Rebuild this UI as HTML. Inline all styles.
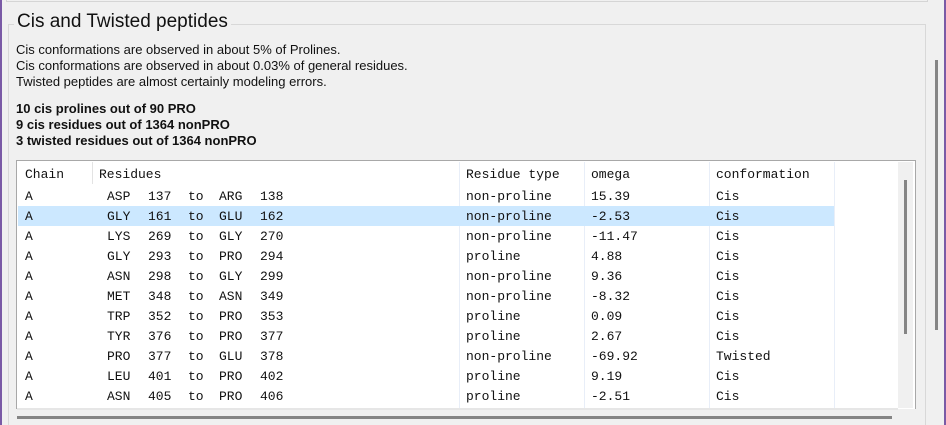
<!DOCTYPE html>
<html><head><style>
body{margin:0;width:946px;height:425px;background:#f0f0f0;position:relative;overflow:hidden;font-family:"Liberation Sans",sans-serif;}
.a{position:absolute}
.m{font-family:"Liberation Mono",monospace;font-size:13px;color:#111;white-space:pre}
</style></head><body>
<div class="a" style="left:0;top:0;width:2px;height:425px;background:#7a5aa6"></div>
<div class="a" style="left:944px;top:0;width:2px;height:425px;background:#7a5aa6"></div>
<div class="a" style="left:6px;top:0;width:920px;height:1px;border-bottom:1px solid #d5d5d5;border-left:1px solid #d5d5d5;border-right:1px solid #d5d5d5"></div>
<div class="a" style="left:8px;top:24px;width:916px;height:400px;border:1px solid #d8d8d8;border-bottom:none"></div>
<div class="a" style="left:14px;top:11px;padding:0 3px;background:#f0f0f0;font-size:19px;color:#111">Cis and Twisted peptides</div>
<div class="a" style="left:16px;top:42px;font-size:13px;line-height:16px;color:#111">Cis conformations are observed in about 5% of Prolines.<br>Cis conformations are observed in about 0.03% of general residues.<br>Twisted peptides are almost certainly modeling errors.</div>
<div class="a" style="left:16px;top:101px;font-size:13px;line-height:16px;font-weight:bold;color:#111">10 cis prolines out of 90 PRO<br>9 cis residues out of 1364 nonPRO<br>3 twisted residues out of 1364 nonPRO</div>
<div class="a" style="left:16px;top:160px;width:898px;height:248px;border:1px solid #a8a8a8;border-bottom:none;background:#fff"></div>
<div class="a" style="left:898px;top:162px;width:15px;height:246px;background:#f0f0f0"></div>
<div class="a" style="left:904px;top:180px;width:3px;height:154px;background:#858585"></div>
<div class="a" style="left:935px;top:60px;width:3px;height:270px;background:#858585"></div>
<div class="a" style="left:17px;top:408px;width:881px;height:2px;background:#e6e6e6"></div>
<div class="a" style="left:17px;top:416px;width:875px;height:3px;background:#858585"></div>
<div class="a" style="left:92px;top:162px;width:1px;height:22px;background:#e3e3e3"></div>
<div class="a" style="left:459px;top:162px;width:1px;height:246px;background:#e8eef8"></div>
<div class="a" style="left:584px;top:162px;width:1px;height:246px;background:#e8eef8"></div>
<div class="a" style="left:709px;top:162px;width:1px;height:246px;background:#e8eef8"></div>
<div class="a" style="left:834px;top:162px;width:1px;height:246px;background:#e8eef8"></div>
<div class="a" style="left:18px;top:206px;width:816px;height:20px;background:#cce8ff"></div>
<div id="t"></div>
<script>
var rows=[["ASP","137","ARG","138","non-proline","15.39","Cis"],["GLY","161","GLU","162","non-proline","-2.53","Cis"],["LYS","269","GLY","270","non-proline","-11.47","Cis"],["GLY","293","PRO","294","proline","4.88","Cis"],["ASN","298","GLY","299","non-proline","9.36","Cis"],["MET","348","ASN","349","non-proline","-8.32","Cis"],["TRP","352","PRO","353","proline","0.09","Cis"],["TYR","376","PRO","377","proline","2.67","Cis"],["PRO","377","GLU","378","non-proline","-69.92","Twisted"],["LEU","401","PRO","402","proline","9.19","Cis"],["ASN","405","PRO","406","proline","-2.51","Cis"]];
var h='';function s(x,y,t){h+='<div class="a m" style="left:'+x+'px;top:'+y+'px">'+t+'</div>';}
var y0=167;s(25,y0,'Chain');s(99,y0,'Residues');s(466,y0,'Residue type');s(591,y0,'omega');s(716,y0,'conformation');
rows.forEach(function(r,i){var y=189+i*20;s(25,y,'A');s(107,y,r[0]);s(148,y,r[1]);s(188,y,'to');s(219,y,r[2]);s(260,y,r[3]);s(466,y,r[4]);s(591,y,r[5]);s(716,y,r[6]);});
document.getElementById('t').innerHTML=h;
</script>
</body></html>
